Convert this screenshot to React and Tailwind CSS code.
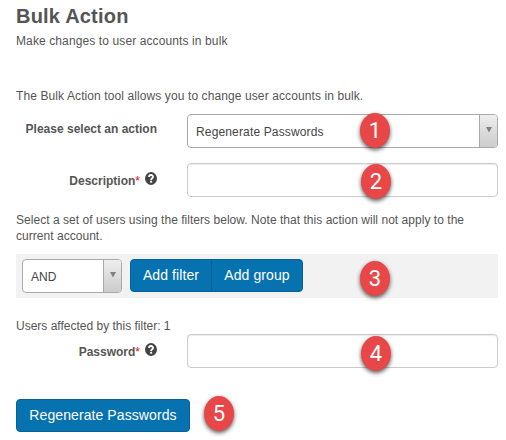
const Badge = ({ n, className }) => (
  <span
    className={`absolute flex h-[35px] w-[30px] items-center justify-center rounded-[50%] bg-[#e84748] font-[Roboto,'Noto_Sans',sans-serif] text-[22px] leading-none text-white shadow-[0_2px_4px_rgba(0,0,0,0.65)] ${className}`}
  >
    {n}
  </span>
);

const Help = () => (
  <svg viewBox="0 0 12 12" className="mb-px ml-[5px] h-[13px] w-3 shrink-0" preserveAspectRatio="none">
    <circle cx="6" cy="6" r="6" fill="#444" />
    <path
      d="M4 4.6C4 2.2 8 2.2 8 4.5C8 5.8 6.1 5.8 6.1 7.3"
      fill="none"
      stroke="#fff"
      strokeWidth="1.8"
    />
    <rect x="5.1" y="8.1" width="2" height="1.7" fill="#fff" />
  </svg>
);

const Select = ({ children, className }) => (
  <div
    className={`flex h-[34px] overflow-hidden rounded-[4px] border border-[#aaa] bg-white text-[12px] text-[#444] ${className}`}
  >
    <span className="flex-1 pl-2 leading-[35px]">{children}</span>
    <span className="flex w-[18px] justify-center border-l border-[#aaa] bg-linear-to-b from-[#eee] to-[#ccc] pt-[12px]">
      <svg viewBox="0 0 6 6" className="size-1.5">
        <path d="M0 0H6L3 5.5Z" fill="#808080" />
      </svg>
    </span>
  </div>
);

const Field = ({ label, className }) => (
  <div className={`flex h-[34px] ${className}`}>
    <div className="flex h-[31px] w-[141px] items-center justify-end text-[12px] font-bold">
      <span className="pt-[4px]">
        {label}
        <span className="font-normal text-[#f00]">*</span>
      </span>
      <Help />
    </div>
    <div className="ml-[30px] w-[311px] rounded-[4px] border border-[#ccc] bg-white shadow-[inset_0_1px_1px_rgba(0,0,0,0.075)]" />
  </div>
);

export default function App() {
  return (
    <main className="relative h-[440px] w-[506px] overflow-hidden bg-white pl-4 font-['Liberation_Sans',Arial,sans-serif] text-[12px] leading-4 text-[#555]">
      <h1 className="h-[33px] pt-1 text-[20px] leading-[24px] font-bold tracking-[0.2px]">Bulk Action</h1>
      <p className="h-[55px] tracking-[0.11px]">Make changes to user accounts in bulk</p>
      <p className="h-[26px] tracking-[0.1px]">The Bulk Action tool allows you to change user accounts in bulk.</p>
      <div className="flex">
        <label className="w-[141px] pt-[7px] text-right font-bold">Please select an action</label>
        <Select className="ml-[30px] w-[311px] tracking-[0.15px]">Regenerate Passwords</Select>
      </div>
      <Field label="Description" className="mt-[15px]" />
      <p className="mt-[15px] w-[482px] tracking-[0.035px]">
        Select a set of users using the filters below. Note that this action will not apply to the
        <br />
        current account.
      </p>
      <div className="mt-[10px] flex h-[44px] w-[482px] bg-[#f2f2f2] pt-[5px] pl-[6px]">
        <Select className="w-[100px]">AND</Select>
        <div className="ml-2 flex h-[33px] w-[173px] rounded-[4px] border border-[#056197] bg-[#0672b0] text-[14px] leading-[31px] tracking-[0.1px] text-white">
          <button className="w-[81px] border-r border-[#056197] text-center">Add filter</button>
          <button className="flex-1 text-center">Add group</button>
        </div>
      </div>
      <p className="mt-[20px] h-4">Users affected by this filter: 1</p>
      <Field label="Password" />
      <button className="mt-[31px] block h-[33px] w-[174px] rounded-[4px] border border-[#056197] bg-[#0672b0] pb-px text-center text-[14px] tracking-[0.09px] text-white">
        Regenerate Passwords
      </button>
      <Badge n={1} className="top-[113px] left-[360px]" />
      <Badge n={2} className="top-[164px] left-[361px]" />
      <Badge n={3} className="top-[261px] left-[360px]" />
      <Badge n={4} className="top-[336px] left-[361px]" />
      <Badge n={5} className="top-[396px] left-[204px]" />
    </main>
  );
}
